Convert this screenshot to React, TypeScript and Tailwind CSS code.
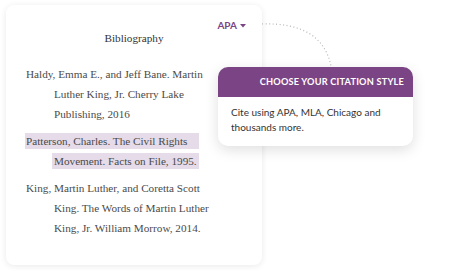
import React from 'react';

type Entry = {
  lines: string[];
  highlight?: boolean;
};

const entries: Entry[] = [
  { lines: ['Haldy, Emma E., and Jeff Bane. Martin', 'Luther King, Jr. Cherry Lake', 'Publishing, 2016'] },
  { lines: ['Patterson, Charles. The Civil Rights', 'Movement. Facts on File, 1995.'], highlight: true },
  { lines: ['King, Martin Luther, and Coretta Scott', 'King. The Words of Martin Luther', 'King, Jr. William Morrow, 2014.'] },
];

const serif = { fontFamily: '"Liberation Serif", "DejaVu Serif", serif' };
const sans = { fontFamily: 'Lato, "Noto Sans", sans-serif' };

function EntryBlock({ entry }: { entry: Entry }) {
  return (
    <div className="mb-[7px]">
      {entry.lines.map((line, i) => (
        <div key={i} className={`h-[20px] leading-[20px] ${i > 0 ? 'pl-[28px]' : ''}`}>
          {entry.highlight ? (
            <span
              className={`inline-block h-[16px] leading-[16px] bg-[#e5dbe9] ${i === 0 ? '-ml-[1px] pl-[1px] w-[174px]' : '-ml-[2px] pl-[2px] w-[147px]'}`}
            >
              {line}
            </span>
          ) : (
            line
          )}
        </div>
      ))}
    </div>
  );
}

export default function App() {
  return (
    <div className="relative w-[449px] h-[272px] bg-white overflow-hidden">
      {/* bibliography card */}
      <div
        className="relative ml-[6px] mt-[5px] w-[256px] h-[260px] rounded-[8px] bg-white shadow-[0_1px_6px_rgba(0,0,0,0.09)] px-[20px] pt-[23px] text-[11.2px] text-[#4a4a4a]"
        style={serif}
      >
        <div
          className="absolute top-[13px] right-[16px] flex items-center gap-[3px] text-[10px] font-bold text-[#7b4486]"
          style={sans}
        >
          APA
          <svg width="6" height="4" viewBox="0 0 6 4">
            <path d="M0 0 L6 0 L3 3.5 Z" fill="#7b4486" />
          </svg>
        </div>
        <div className="text-center h-[20px] leading-[20px] text-[#333] mb-[16px]">Bibliography</div>
        {entries.map((e, i) => (
          <EntryBlock key={i} entry={e} />
        ))}
      </div>

      {/* dotted connector */}
      <svg className="absolute left-0 top-0" width="449" height="272">
        <path
          d="M262 24 Q322 22 331 66"
          fill="none"
          stroke="#b8b8b8"
          strokeWidth="1.2"
          strokeDasharray="1 2.5"
        />
      </svg>

      {/* tooltip */}
      <div
        className="absolute left-[218px] top-[67px] w-[195px] rounded-[10px] bg-white shadow-[0_4px_14px_rgba(0,0,0,0.13)] overflow-hidden"
        style={sans}
      >
        <div className="h-[30px] bg-[#7b4485] flex items-center justify-end pr-[9px] text-[9.2px] font-bold tracking-[0.2px] text-white uppercase">
          Choose your citation style
        </div>
        <div className="px-[13px] pt-[8px] pb-[11px] text-[10px] leading-[15px] text-[#333]">
          Cite using APA, MLA, Chicago and thousands more.
        </div>
      </div>
    </div>
  );
}
